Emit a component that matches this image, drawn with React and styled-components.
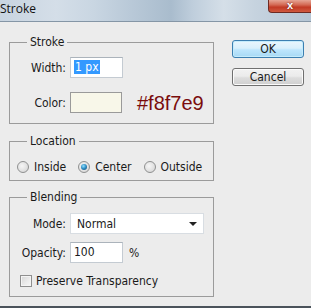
import React from 'react'
import styled, {createGlobalStyle} from 'styled-components'

const GlobalStyle = createGlobalStyle`
    html, body {
        margin: 0;
        padding: 0;
        background: #ececec;
    }
`;

const Window = styled.div`
    width: 311px;
    height: 308px;
    display: flex;
    flex-direction: column;
    background: #ececec;
    border-bottom: 2px solid #4b535b;
    box-sizing: border-box;
    overflow: hidden;
    font-family: "DejaVu Sans Condensed", "DejaVu Sans", sans-serif;
    font-size: 12px;
    color: #1a1a1a;
`;

const TitleBar = styled.div`
    height: 21px;
    flex: none;
    display: flex;
    align-items: flex-start;
    justify-content: space-between;
    border-bottom: 1px solid #8596a6;
    background: linear-gradient(90deg,
        #c8d4e0 0%, #d4dee8 18%, #c9d6e2 30%, #b9c9d8 42%,
        #a9bccd 55%, #bfcedc 62%, #d5dfe8 72%, #c6d3df 82%, #b5c5d4 100%);
`;

const TitleText = styled.span`
    font-family: "Open Sans", "Noto Sans", sans-serif;
    font-weight: 400;
    font-size: 12px;
    line-height: 15px;
    padding-top: 1px;
    color: #111;
`;

const CloseButton = styled.div`
    width: 43px;
    height: 13px;
    box-sizing: border-box;
    border: 1px solid #6e2a22;
    border-top: none;
    border-right: none;
    border-radius: 0 0 0 4px;
    background: linear-gradient(180deg, #e6a595 0%, #d46a55 40%, #c23a25 60%, #d05a40 100%);
    color: #fff;
    font-family: "Liberation Sans", sans-serif;
    font-weight: bold;
    font-size: 11px;
    line-height: 10px;
    text-align: center;
    text-shadow: 0 0 2px #5a1010;
`;

const Body = styled.div`
    flex: 1;
    display: flex;
    gap: 18px;
`;

const MainColumn = styled.div`
    width: 205px;
    padding: 13px 0 0 9px;
    display: flex;
    flex-direction: column;
`;

const Group = styled.fieldset`
    margin: 0 0 ${p => p.$gap || 0}px 0;
    padding: ${p => p.$pad};
    border: 1px solid #9b9b9b;
    min-width: 0;
`;

const Legend = styled.legend`
    margin-left: 17px;
    padding: 0 3px;
    line-height: 14px;
    color: #1a1a1a;
`;

const FieldGrid = styled.div`
    display: grid;
    grid-template-columns: 56px auto;
    column-gap: 4px;
    row-gap: ${p => p.$rowGap}px;
    align-items: center;
`;

const Label = styled.span`
    text-align: right;
    white-space: nowrap;
`;

const TextBox = styled.div`
    width: 53px;
    height: 21px;
    box-sizing: border-box;
    background: #fff;
    border: 1px solid #c4cbd2;
    border-top-color: #abb3bb;
    padding: 2px 0 0 3px;
    line-height: 15px;
`;

const Selected = styled.span`
    background: #3399ff;
    color: #fff;
    padding: 0 1px;
`;

const ColorRow = styled.div`
    display: flex;
    align-items: center;
    gap: 15px;
`;

const Swatch = styled.div`
    width: 52px;
    height: 21px;
    box-sizing: border-box;
    background: #f8f7e9;
    border: 1px solid #9a9a9a;
`;

const HexText = styled.span`
    font-family: "Liberation Sans", Arial, sans-serif;
    font-size: 20px;
    color: #7a0c0c;
    line-height: 20px;
`;

const RadioRow = styled.div`
    display: flex;
    align-items: center;
    padding-left: 7px;
    gap: 12px;
`;

const RadioItem = styled.label`
    display: flex;
    align-items: center;
    gap: 5px;
`;

const Radio = styled.span`
    width: 12px;
    height: 12px;
    box-sizing: border-box;
    border-radius: 50%;
    border: 1px solid #8f9090;
    background: radial-gradient(circle at 40% 40%, #f6f6f6 0%, #dcdcdc 70%, #c8c8c8 100%);
    display: flex;
    align-items: center;
    justify-content: center;

    &::after {
        content: '';
        width: 6px;
        height: 6px;
        border-radius: 50%;
        display: ${p => (p.$checked ? 'block' : 'none')};
        background: radial-gradient(circle at 40% 35%, #8fe0ff 0%, #2b89c0 50%, #16486a 100%);
    }
`;

const Select = styled.div`
    width: 134px;
    height: 21px;
    box-sizing: border-box;
    background: #fff;
    border: 1px solid #d8dde2;
    display: flex;
    align-items: center;
    justify-content: space-between;
    padding: 0 6px 0 6px;
`;

const Caret = styled.span`
    width: 0;
    height: 0;
    border-left: 4px solid transparent;
    border-right: 4px solid transparent;
    border-top: 4px solid #222;
`;

const OpacityRow = styled.div`
    display: flex;
    align-items: center;
    gap: 6px;
`;

const CheckRow = styled.label`
    display: flex;
    align-items: center;
    gap: 4px;
    padding-left: 10px;
    margin-top: 11px;
`;

const Checkbox = styled.span`
    width: 12px;
    height: 12px;
    box-sizing: border-box;
    border: 1px solid #8f8f8f;
    background: linear-gradient(135deg, #d6d6d6 0%, #ececec 60%, #f7f7f7 100%);
    box-shadow: inset 0 0 0 1px #f4f4f4;
`;

const ButtonColumn = styled.div`
    padding-top: 18px;
    display: flex;
    flex-direction: column;
    gap: 10px;
`;

const Button = styled.div`
    width: 72px;
    height: 18px;
    box-sizing: border-box;
    border-radius: 3px;
    display: flex;
    align-items: center;
    justify-content: center;
    font-family: "DejaVu Sans Condensed", "DejaVu Sans", sans-serif;
    font-size: 12px;
    border: 1px solid ${p => (p.$primary ? '#3c7fb1' : '#707070')};
    background: ${p => p.$primary
        ? 'linear-gradient(180deg, #eaf6fd 0%, #d9f0fc 45%, #bee6fd 55%, #a7d9f5 100%)'
        : 'linear-gradient(180deg, #f2f2f2 0%, #ebebeb 45%, #dddddd 55%, #cfcfcf 100%)'};
    box-shadow: inset 0 0 0 1px ${p => (p.$primary ? '#c5ecfc' : '#fbfbfb')};
`;

function App() {
    return (
        <Window>
            <GlobalStyle />
            <TitleBar>
                <TitleText>Stroke</TitleText>
                <CloseButton>x</CloseButton>
            </TitleBar>

            <Body>
                <MainColumn>
                    <Group $pad="8px 0 10px 0" $gap={10}>
                        <Legend>Stroke</Legend>
                        <FieldGrid $rowGap={14}>
                            <Label>Width:</Label>
                            <TextBox><Selected>1 px</Selected></TextBox>
                            <Label>Color:</Label>
                            <ColorRow>
                                <Swatch />
                                <HexText>#f8f7e9</HexText>
                            </ColorRow>
                        </FieldGrid>
                    </Group>

                    <Group $pad="12px 0 6px 0" $gap={9}>
                        <Legend>Location</Legend>
                        <RadioRow>
                            <RadioItem><Radio />Inside</RadioItem>
                            <RadioItem><Radio $checked />Center</RadioItem>
                            <RadioItem><Radio />Outside</RadioItem>
                        </RadioRow>
                    </Group>

                    <Group $pad="9px 0 8px 0">
                        <Legend>Blending</Legend>
                        <FieldGrid $rowGap={8}>
                            <Label>Mode:</Label>
                            <Select>Normal<Caret /></Select>
                            <Label>Opacity:</Label>
                            <OpacityRow>
                                <TextBox>100</TextBox>
                                <span>%</span>
                            </OpacityRow>
                        </FieldGrid>
                        <CheckRow><Checkbox />Preserve Transparency</CheckRow>
                    </Group>
                </MainColumn>

                <ButtonColumn>
                    <Button $primary>OK</Button>
                    <Button>Cancel</Button>
                </ButtonColumn>
            </Body>
        </Window>
    )
}

export default App;
